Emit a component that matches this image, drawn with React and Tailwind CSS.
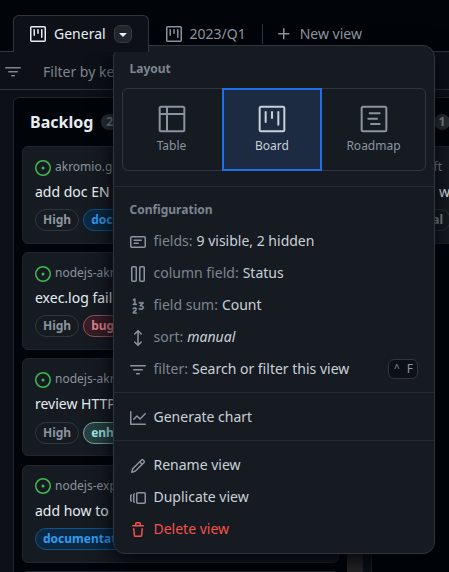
import React from "react";
import { GoProject, GoTable, GoProjectRoadmap, GoNumber } from "react-icons/go";

const PATHS = {
  project:
    "M1.75 0h12.5C15.216 0 16 .784 16 1.75v12.5A1.75 1.75 0 0 1 14.25 16H1.75A1.75 1.75 0 0 1 0 14.25V1.75C0 .784.784 0 1.75 0ZM1.5 1.75v12.5c0 .138.112.25.25.25h12.5a.25.25 0 0 0 .25-.25V1.75a.25.25 0 0 0-.25-.25H1.75a.25.25 0 0 0-.25.25ZM11.75 3a.75.75 0 0 1 .75.75v7.5a.75.75 0 0 1-1.5 0v-7.5a.75.75 0 0 1 .75-.75Zm-8.25.75a.75.75 0 0 1 1.5 0v5.5a.75.75 0 0 1-1.5 0ZM8 3a.75.75 0 0 1 .75.75v3.5a.75.75 0 0 1-1.5 0v-3.5A.75.75 0 0 1 8 3Z",
  filter:
    "M.75 3h14.5a.75.75 0 0 1 0 1.5H.75a.75.75 0 0 1 0-1.5ZM3 7.75A.75.75 0 0 1 3.75 7h8.5a.75.75 0 0 1 0 1.5h-8.5A.75.75 0 0 1 3 7.75Zm3 4a.75.75 0 0 1 .75-.75h2.5a.75.75 0 0 1 0 1.5h-2.5a.75.75 0 0 1-.75-.75Z",
  note:
    "M0 3.75C0 2.784.784 2 1.75 2h12.5c.966 0 1.75.784 1.75 1.75v8.5A1.75 1.75 0 0 1 14.25 14H1.75A1.75 1.75 0 0 1 0 12.25Zm1.75-.25a.25.25 0 0 0-.25.25v8.5c0 .138.112.25.25.25h12.5a.25.25 0 0 0 .25-.25v-8.5a.25.25 0 0 0-.25-.25ZM3.5 6.25a.75.75 0 0 1 .75-.75h7a.75.75 0 0 1 0 1.5h-7a.75.75 0 0 1-.75-.75Zm.75 2.25h4a.75.75 0 0 1 0 1.5h-4a.75.75 0 0 1 0-1.5Z",
  columns:
    "M2.75 0h2.5C6.216 0 7 .784 7 1.75v12.5A1.75 1.75 0 0 1 5.25 16h-2.5A1.75 1.75 0 0 1 1 14.25V1.75C1 .784 1.784 0 2.75 0Zm8 0h2.5C14.216 0 15 .784 15 1.75v12.5A1.75 1.75 0 0 1 13.25 16h-2.5A1.75 1.75 0 0 1 9 14.25V1.75C9 .784 9.784 0 10.75 0ZM2.5 1.75v12.5c0 .138.112.25.25.25h2.5a.25.25 0 0 0 .25-.25V1.75a.25.25 0 0 0-.25-.25h-2.5a.25.25 0 0 0-.25.25Zm8 0v12.5c0 .138.112.25.25.25h2.5a.25.25 0 0 0 .25-.25V1.75a.25.25 0 0 0-.25-.25h-2.5a.25.25 0 0 0-.25.25Z",
  sort:
    "M7.47.22a.75.75 0 0 1 1.06 0l3.25 3.25a.75.75 0 0 1-1.06 1.06L8.75 2.56v10.88l1.97-1.97a.75.75 0 1 1 1.06 1.06l-3.25 3.25a.75.75 0 0 1-1.06 0l-3.25-3.25a.75.75 0 1 1 1.06-1.06l1.97 1.97V2.56L5.28 4.53a.75.75 0 0 1-1.06-1.06Z",
  graph:
    "M1.5 1.75V13.5h13.75a.75.75 0 0 1 0 1.5H.75a.75.75 0 0 1-.75-.75V1.75a.75.75 0 0 1 1.5 0Zm14.28 2.53-5.25 5.25a.75.75 0 0 1-1.06 0L7 7.06 4.28 9.78a.751.751 0 0 1-1.042-.018.751.751 0 0 1-.018-1.042l3.25-3.25a.75.75 0 0 1 1.06 0L10 7.94l4.72-4.72a.751.751 0 0 1 1.042.018.751.751 0 0 1 .018 1.042Z",
  pencil:
    "M11.013 1.427a1.75 1.75 0 0 1 2.474 0l1.086 1.086a1.75 1.75 0 0 1 0 2.474l-8.61 8.61c-.21.21-.47.364-.756.445l-3.251.93a.75.75 0 0 1-.927-.928l.929-3.25c.081-.286.235-.547.445-.758l8.61-8.61Zm.176 4.823L9.75 4.81l-6.286 6.287a.253.253 0 0 0-.064.108l-.558 1.953 1.953-.558a.253.253 0 0 0 .108-.064Zm1.238-3.763a.25.25 0 0 0-.354 0L10.811 3.75l1.439 1.44 1.263-1.263a.25.25 0 0 0 0-.354Z",
  versions:
    "M7.75 14A1.75 1.75 0 0 1 6 12.25v-8.5C6 2.784 6.784 2 7.75 2h6.5c.966 0 1.75.784 1.75 1.75v8.5A1.75 1.75 0 0 1 14.25 14Zm-.25-1.75c0 .138.112.25.25.25h6.5a.25.25 0 0 0 .25-.25v-8.5a.25.25 0 0 0-.25-.25h-6.5a.25.25 0 0 0-.25.25ZM4.9 3.508a.75.75 0 0 1-.274 1.025.249.249 0 0 0-.126.217v6.5c0 .09.048.173.126.217a.75.75 0 0 1-.752 1.298A1.75 1.75 0 0 1 3 11.25v-6.5c0-.649.353-1.214.874-1.516a.75.75 0 0 1 1.025.274ZM1.625 5.533h.001a.249.249 0 0 0-.126.217v4.5c0 .09.048.173.126.217a.75.75 0 0 1-.752 1.298A1.748 1.748 0 0 1 0 10.25v-4.5a1.748 1.748 0 0 1 .873-1.516.75.75 0 1 1 .752 1.299Z",
  trash:
    "M11 1.75V3h2.25a.75.75 0 0 1 0 1.5H2.75a.75.75 0 0 1 0-1.5H5V1.75C5 .784 5.784 0 6.75 0h2.5C10.216 0 11 .784 11 1.75ZM4.496 6.675l.66 6.6a.25.25 0 0 0 .249.225h5.19a.25.25 0 0 0 .249-.225l.66-6.6a.75.75 0 0 1 1.492.149l-.66 6.6A1.748 1.748 0 0 1 10.595 15h-5.19a1.75 1.75 0 0 1-1.741-1.575l-.66-6.6a.75.75 0 1 1 1.492-.15ZM6.5 1.75V3h3V1.75a.25.25 0 0 0-.25-.25h-2.5a.25.25 0 0 0-.25.25Z",
  plus:
    "M7.75 2a.75.75 0 0 1 .75.75V7h4.25a.75.75 0 0 1 0 1.5H8.5v4.25a.75.75 0 0 1-1.5 0V8.5H2.75a.75.75 0 0 1 0-1.5H7V2.75A.75.75 0 0 1 7.75 2Z",
  issue:
    "M8 9.5a1.5 1.5 0 1 0 0-3 1.5 1.5 0 0 0 0 3ZM8 0a8 8 0 1 1 0 16A8 8 0 0 1 8 0ZM1.5 8a6.5 6.5 0 1 0 13 0 6.5 6.5 0 0 0-13 0Z",
  caret:
    "m4.427 7.427 3.396 3.396a.25.25 0 0 0 .354 0l3.396-3.396A.25.25 0 0 0 11.396 7H4.604a.25.25 0 0 0-.177.427Z",
};

function Icon({ name, className = "" }) {
  return (
    <svg viewBox="0 0 16 16" fill="currentColor" className={`block size-4 shrink-0 ${className}`}>
      <path d={PATHS[name]} />
    </svg>
  );
}

const LABELS = {
  gray: "border-[#30363d] text-[#8b949e]",
  blue: "border-[#15528a] bg-[#0c2941] text-[#2f9cf4]",
  red: "border-[#93525c] bg-[#371d26] text-[#e0848f]",
  teal: "border-[#6fa8a6] bg-[#28403f] text-[#a2eeef]",
};

function Card({ repo, title, labels }) {
  return (
    <div className="h-[98px] shrink-0 rounded-md border border-[#21262d] bg-[#161b22] px-3 pt-2.5">
      <div className="flex h-5 items-center gap-1 text-xs text-[#8b949e]">
        <Icon name="issue" className="mt-[1.5px] text-[#3fb950]" />
        <span className="whitespace-nowrap">{repo}</span>
      </div>
      <div className="mt-[5px] h-5 text-sm leading-5 whitespace-nowrap text-[#e6edf3]">{title}</div>
      <div className="mt-[7.2px] flex gap-1">
        {labels.map(([text, tone]) => (
          <span
            key={text}
            className={`flex h-[22px] items-center rounded-full border px-[7px] text-xs font-bold whitespace-nowrap ${LABELS[tone]}`}
          >
            {text}
          </span>
        ))}
      </div>
    </div>
  );
}

const CARDS = [
  { repo: "akromio.g", title: "add doc EN", labels: [["High", "gray"], ["docs", "blue"]] },
  { repo: "nodejs-akro", title: "exec.log fail", labels: [["High", "gray"], ["bug", "red"]] },
  { repo: "nodejs-akro", title: "review HTTP", labels: [["High", "gray"], ["enhancement", "teal"]] },
  { repo: "nodejs-exp", title: "add how to", labels: [["documentation", "blue"]] },
];

function Row({ icon, label, children, danger }) {
  return (
    <div
      className={`flex h-8 items-center gap-[7.5px] px-4 text-sm whitespace-nowrap ${danger ? "text-[#f85149]" : "text-[#c9d1d9]"}`}
    >
      <span className={`mt-0.5 ${danger ? "" : "text-[#8b949e]"}`}>{icon}</span>
      {label && <span className="-mr-[3.5px] text-[#7d8590]">{label}</span>}
      {children}
    </div>
  );
}

function Divider() {
  return <div className="mt-[7px] mb-2 h-px bg-[#252a31]" />;
}

function LayoutOption({ icon, text }) {
  return (
    <div className="flex h-full w-[99px] flex-col items-center pt-3.5 text-[#8b949e]">
      {icon}
      <span className="mt-px text-xs leading-5">{text}</span>
    </div>
  );
}

function ViewMenu() {
  return (
    <div className="absolute top-[45px] left-[113px] h-[509px] w-[322px] rounded-xl border border-[#30363d] bg-[#161b22] shadow-[0_8px_24px_#010409]">
      <div className="flex h-[42px] items-center px-[15.5px] pt-1 text-xs font-bold text-[#7d8590]">Layout</div>
      <div className="mx-2 flex h-[83px] w-[304px] rounded-md border border-[#30363d]">
        <div className="-mr-px -ml-px pr-0.5">
          <LayoutOption icon={<GoTable size={32} />} text="Table" />
        </div>
        <div className="-mt-px flex h-[83px] w-[100px] flex-col items-center border-2 border-[#1f6feb] bg-[#1c2b42] pt-[13px] text-[#c9d1d9]">
          <GoProject size={32} />
          <span className="mt-px text-xs leading-5">Board</span>
        </div>
        <div className="ml-0.5">
          <LayoutOption icon={<GoProjectRoadmap size={32} />} text="Roadmap" />
        </div>
      </div>
      <div className="mt-[15px] h-px bg-[#252a31]" />
      <div className="flex h-[38px] items-center px-[15.5px] pt-[7px] text-xs font-bold text-[#7d8590]">Configuration</div>
      <Row icon={<Icon name="note" />} label="fields:">9 visible, 2 hidden</Row>
      <Row icon={<Icon name="columns" />} label="column field:">Status</Row>
      <Row icon={<GoNumber size={18} strokeWidth={0.6} className="-mx-px" />} label="field sum:">Count</Row>
      <Row icon={<Icon name="sort" />} label="sort:"><em>manual</em></Row>
      <Row icon={<Icon name="filter" />} label="filter:">
        <span>Search or filter this view</span>
        <kbd className="ml-auto flex h-5 w-[30px] items-center justify-center gap-[7px] rounded-md border border-[#30363d] bg-[#0d1117] pl-px font-['Noto_Sans'] text-xs text-[#8b949e]">
          <span className="text-[10px]">^</span>
          <span>F</span>
        </kbd>
      </Row>
      <Divider />
      <Row icon={<Icon name="graph" />}>Generate chart</Row>
      <Divider />
      <Row icon={<Icon name="pencil" />}>Rename view</Row>
      <Row icon={<Icon name="versions" />}>Duplicate view</Row>
      <Row icon={<Icon name="trash" />} danger>Delete view</Row>
    </div>
  );
}

export default function App() {
  return (
    <div className="relative flex h-[572px] w-[449px] flex-col overflow-hidden bg-[#010409] font-['Noto_Sans',sans-serif]">
      {/* View tabs */}
      <div className="z-10 flex h-[52px] shrink-0 pt-[15px] pl-[13px] text-sm text-[#8b949e]">
        <div className="flex w-[136px] items-center rounded-t-md border border-b-0 border-[#30363d] bg-[#0d1117] pl-4 text-[#e6edf3]">
          <Icon name="project" />
          <span className="ml-2">General</span>
          <span className="ml-2 flex size-[18px] items-center justify-center rounded-md border border-[#363b42] bg-[#21262d]">
            <Icon name="caret" />
          </span>
        </div>
        <div className="flex items-center pl-[17px]">
          <Icon name="project" />
          <span className="ml-[7.5px]">2023/Q1</span>
        </div>
        <div className="mt-[9px] ml-4 h-5 w-px bg-[#30363d]" />
        <div className="flex items-center pl-[13px]">
          <Icon name="plus" />
          <span className="ml-2 whitespace-nowrap">New view</span>
        </div>
      </div>

      {/* Filter bar */}
      <div className="-mt-px flex h-[39px] shrink-0 items-center border-y border-[#30363d] bg-[#0d1117] pt-0.5 pl-[5px] text-sm text-[#7d8590]">
        <Icon name="filter" />
        <span className="ml-[22px] whitespace-nowrap">Filter by key</span>
      </div>

      {/* Board */}
      <div className="flex h-[482px] w-[730px] shrink-0 gap-2 bg-[#0d1117] pt-[7px] pl-[13px]">
        <section className="flex h-[500px] w-[350px] shrink-0 rounded-t-md border border-[#21262d] bg-[#010409]">
          <div className="flex-1 pl-2">
            <div className="flex h-12 items-center gap-2 pl-2 text-base font-bold text-[#e6edf3]">
              Backlog
              <span className="flex h-4 items-center rounded-full bg-[#2b3037] px-[5px] text-xs text-[#7d8590]">2</span>
            </div>
            <div className="flex w-[317px] flex-col gap-[8.2px]">
              {CARDS.map((card, i) => (
                <Card key={i} {...card} />
              ))}
              <div className="h-[98px] shrink-0 rounded-md border border-[#21262d] bg-[#161b22]" />
            </div>
          </div>
          <div className="w-[15px] bg-[#2b2b2b]" />
        </section>
        <section className="h-[500px] w-[350px] shrink-0 rounded-t-md border border-[#21262d] bg-[#010409] px-2">
          <div className="flex h-12 items-center pl-[54px]">
            <span className="flex size-4 items-center justify-center rounded-full bg-[#2b3037] text-xs font-bold text-[#8b949e]">1</span>
          </div>
          <div className="h-[98px] rounded-md border border-[#21262d] bg-[#161b22] pt-2.5 pl-3">
            <div className="flex h-5 w-[49px] justify-end text-xs leading-5 text-[#8b949e]">Draft</div>
            <div className="mt-[5px] h-5 pl-[46px] text-sm leading-5 text-[#e6edf3]">w</div>
            <div className="mt-[7px] flex">
              <span className="flex h-[22px] w-[58px] items-center justify-end rounded-full border border-[#30363d] pr-[7px] text-xs font-bold text-[#8b949e]">
                Normal
              </span>
            </div>
          </div>
        </section>
      </div>

      <ViewMenu />
    </div>
  );
}
